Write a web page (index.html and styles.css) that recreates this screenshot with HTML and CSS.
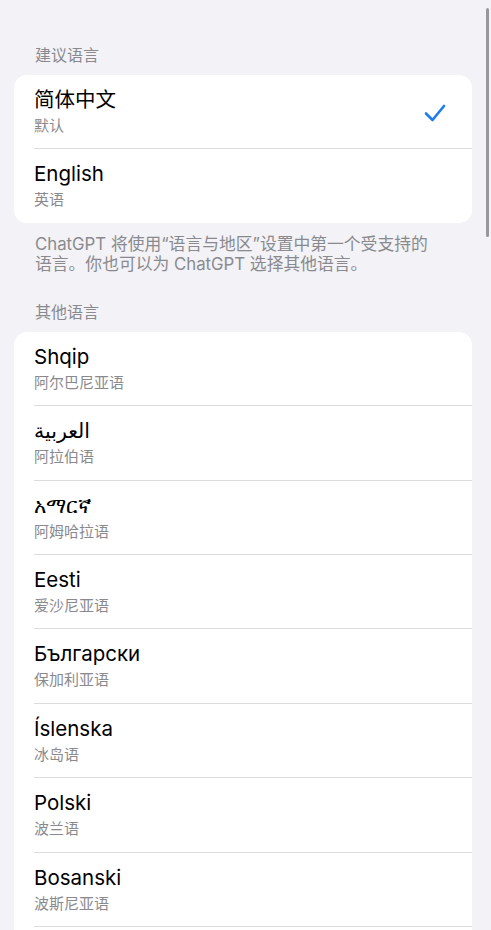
FILE: index.html
```html
<!DOCTYPE html>
<html lang="zh-CN">
<head>
    <meta charset="UTF-8">
    <meta name="viewport" content="width=device-width, initial-scale=1.0">
    <title>语言</title>
    <link rel="stylesheet" href="styles.css">
</head>
<body>
    <div class="scroll-thumb"></div>
    <div class="page">
        <div class="section">
            <div class="section-title">建议语言</div>
            <div class="group">
                <div class="row">
                    <div class="row-text">
                        <div class="lang-name">简体中文</div>
                        <div class="lang-sub">默认</div>
                    </div>
                    <svg class="check" width="22" height="18" viewBox="0 0 22 18">
                        <path d="M2 9.5 L8.5 16 L20 2" fill="none" stroke="#1c7cf0" stroke-width="2.6" stroke-linecap="round" stroke-linejoin="round"/>
                    </svg>
                </div>
                <div class="row">
                    <div class="row-text">
                        <div class="lang-name">English</div>
                        <div class="lang-sub">英语</div>
                    </div>
                </div>
            </div>
            <p class="section-note">ChatGPT 将使用“语言与地区”设置中第一个受支持的<br>语言。你也可以为 ChatGPT 选择其他语言。</p>
        </div>

        <div class="section">
            <div class="section-title">其他语言</div>
            <!-- long list, keeps going below the fold -->
            <div class="group group-open">
                <div class="row">
                    <div class="row-text">
                        <div class="lang-name">Shqip</div>
                        <div class="lang-sub">阿尔巴尼亚语</div>
                    </div>
                </div>
                <div class="row">
                    <div class="row-text">
                        <div class="lang-name" dir="rtl">العربية</div>
                        <div class="lang-sub">阿拉伯语</div>
                    </div>
                </div>
                <div class="row">
                    <div class="row-text">
                        <div class="lang-name">አማርኛ</div>
                        <div class="lang-sub">阿姆哈拉语</div>
                    </div>
                </div>
                <div class="row">
                    <div class="row-text">
                        <div class="lang-name">Eesti</div>
                        <div class="lang-sub">爱沙尼亚语</div>
                    </div>
                </div>
                <div class="row">
                    <div class="row-text">
                        <div class="lang-name" lang="bg">Български</div>
                        <div class="lang-sub">保加利亚语</div>
                    </div>
                </div>
                <div class="row">
                    <div class="row-text">
                        <div class="lang-name">Íslenska</div>
                        <div class="lang-sub">冰岛语</div>
                    </div>
                </div>
                <div class="row">
                    <div class="row-text">
                        <div class="lang-name">Polski</div>
                        <div class="lang-sub">波兰语</div>
                    </div>
                </div>
                <div class="row">
                    <div class="row-text">
                        <div class="lang-name">Bosanski</div>
                        <div class="lang-sub">波斯尼亚语</div>
                    </div>
                </div>
            </div>
        </div>
    </div>
</body>
</html>
```

FILE: styles.css
```css
html, body {
    height: 930px;
    overflow: hidden;
}
body {
    margin: 0;
    background-color: #f2f2f7;
    font-family: Inter, "Noto Sans CJK SC", "DejaVu Sans", "Noto Sans", sans-serif;
    color: #000;
}
.page {
    padding: 45px 19px 0 14px;
}
.section-title {
    font-size: 16px;
    line-height: 21px;
    color: #8a8a8e;
    padding-left: 21px;
    margin-bottom: 9px;
}
.group {
    background-color: #fff;
    border-radius: 13px;
    overflow: hidden;
}
.group-open {
    padding-bottom: 40px;
    border-radius: 13px 13px 0 0;
}
.row {
    display: flex;
    align-items: center;
    margin-left: 20px;
    padding: 12px 20px 12.4px 0;
    border-bottom: 1px solid #dcdcdf;
}
.group .row:last-child {
    border-bottom: none;
}
.group-open .row:last-child {
    border-bottom: 1px solid #dcdcdf;
}
.row-text {
    flex: 1;
}
.lang-name {
    font-size: 20.5px;
    line-height: 26px;
    text-align: left;
}
.lang-sub {
    font-size: 15px;
    line-height: 20px;
    margin-top: 3px;
    color: #8a8a8e;
}
.check {
    margin-right: 6px;
    margin-top: 2px;
}
.section-note {
    margin: 11px 0 28px;
    padding-left: 21px;
    font-size: 16.8px;
    line-height: 20px;
    color: #8a8a8e;
}
.scroll-thumb {
    position: absolute;
    top: 8px;
    right: 2px;
    width: 3px;
    height: 229px;
    border-radius: 2px;
    background-color: #98989c;
}
```
